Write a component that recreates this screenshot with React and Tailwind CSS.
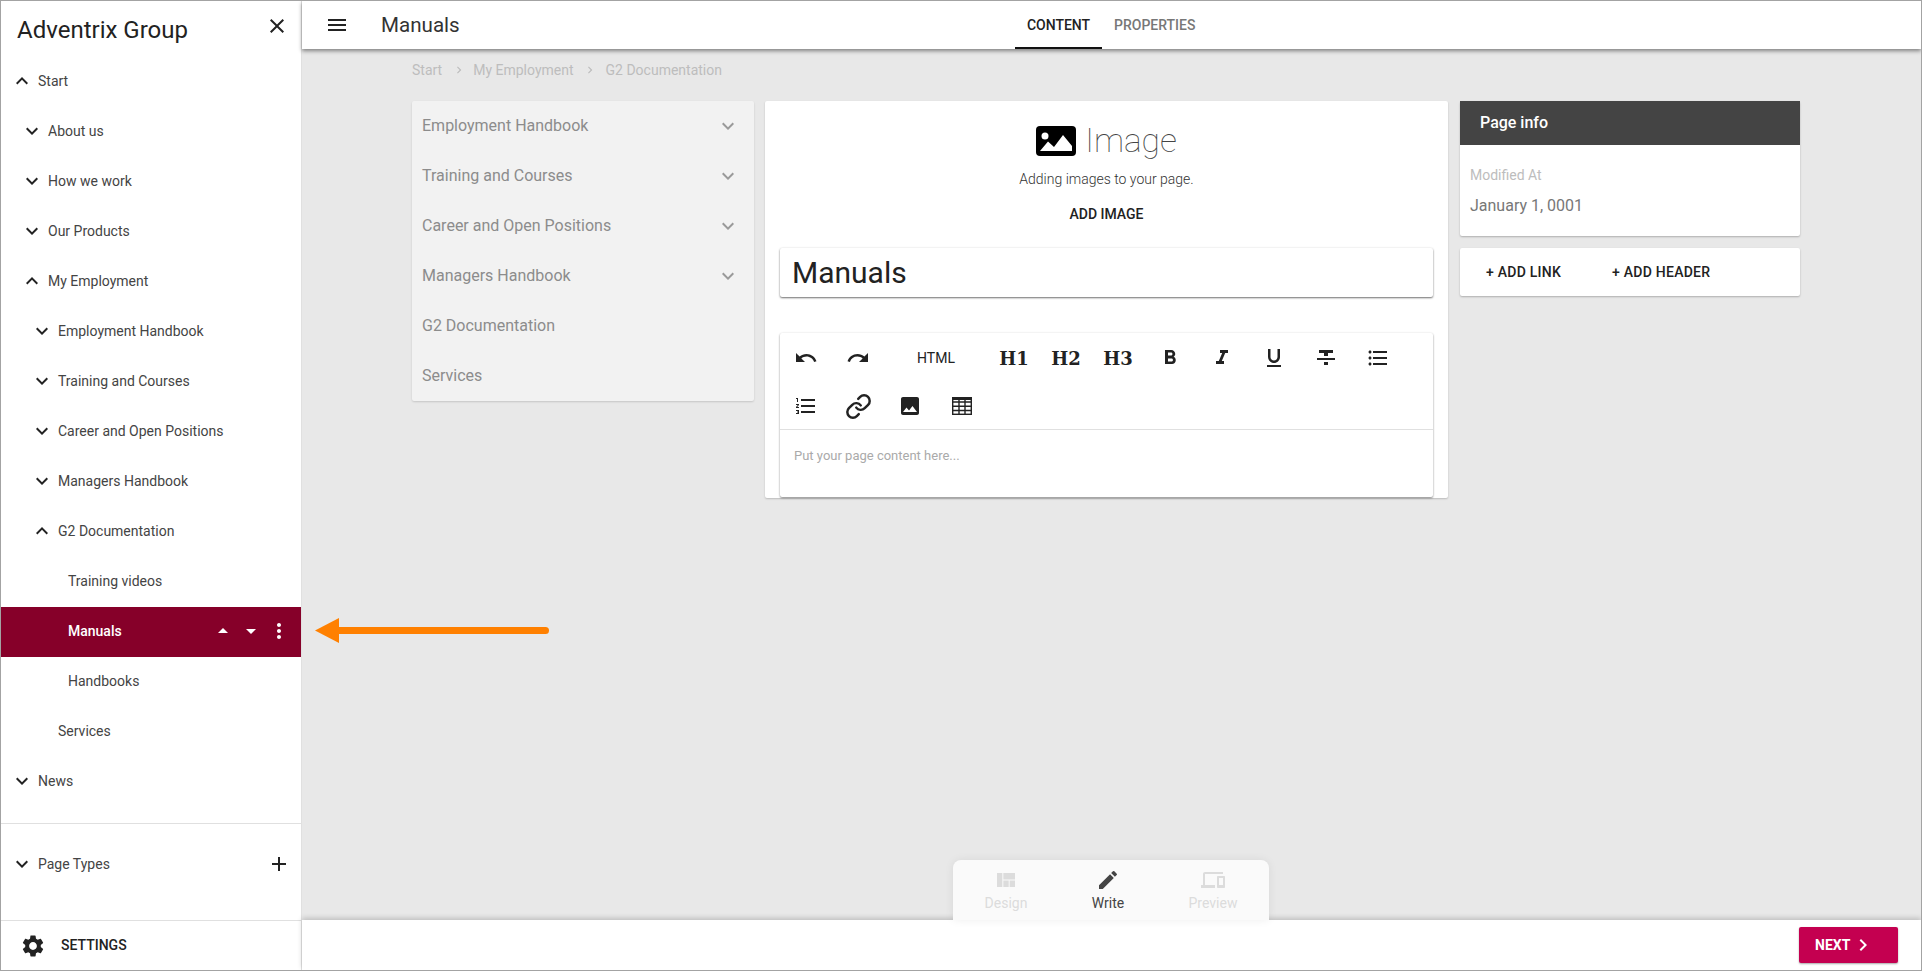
import React from "react";
import {
  MdExpandMore, MdExpandLess, MdClose, MdMenu, MdAdd, MdSettings, MdArrowDropUp, MdArrowDropDown, MdMoreVert,
  MdUndo, MdRedo, MdFormatBold, MdFormatItalic, MdFormatUnderlined, MdFormatStrikethrough, MdFormatListBulleted,
  MdFormatListNumbered, MdImage, MdViewQuilt, MdEdit, MdDevices, MdChevronRight,
} from "react-icons/md";
import { Link as LinkIcon } from "lucide-react";

const tree = [
  ["Start", "pl-[9px]", "up"],
  ["About us", "pl-[19px]", "down"],
  ["How we work", "pl-[19px]", "down"],
  ["Our Products", "pl-[19px]", "down"],
  ["My Employment", "pl-[19px]", "up"],
  ["Employment Handbook", "pl-[29px]", "down"],
  ["Training and Courses", "pl-[29px]", "down"],
  ["Career and Open Positions", "pl-[29px]", "down"],
  ["Managers Handbook", "pl-[29px]", "down"],
  ["G2 Documentation", "pl-[29px]", "up"],
  ["Training videos", "pl-[67px]", null],
  ["Manuals", "pl-[67px]", "active"],
  ["Handbooks", "pl-[67px]", null],
  ["Services", "pl-[57px]", null],
  ["News", "pl-[9px]", "down"],
];

function TreeRow({ label, pad, kind }) {
  if (kind === "active") {
    return (
      <div className={`h-[50px] flex items-center pb-[2px] bg-[#860029] text-white font-medium text-[14px] ${pad}`}>
        <span className="flex-1">{label}</span>
        <MdArrowDropUp size={24} className="mr-[4px]" />
        <MdArrowDropDown size={24} className="mr-[4px]" />
        <MdMoreVert size={24} className="mr-[10px]" />
      </div>
    );
  }
  return (
    <div className={`h-[50px] flex items-center pb-[2px] text-[#444] text-[14px] ${pad}`}>
      {kind === "up" && <MdExpandLess size={24} className="mr-[4px] text-[#222]" />}
      {kind === "down" && <MdExpandMore size={24} className="mr-[4px] text-[#222]" />}
      <span>{label}</span>
    </div>
  );
}

function Sidebar() {
  return (
    <aside className="w-[301px] shrink-0 h-full flex flex-col bg-white border-r border-[#e0e0e0]">
      <div className="h-[56px] flex items-center justify-between pl-[16px] pr-[12px]">
        <span className="text-[24px] text-[#222] leading-none pt-[2px]">Adventrix Group</span>
        <MdClose size={24} className="text-[#222] -mt-[7px]" />
      </div>
      <div className="flex-1">
        {tree.map(([l, p, k]) => <TreeRow key={l} label={l} pad={p} kind={k} />)}
      </div>
      <div className="h-[97px] border-t border-[#e0e0e0] flex items-center pl-[9px] pr-[10px] text-[14px] text-[#444] pb-[16px]">
        <MdExpandMore size={24} className="mr-[4px] text-[#222]" />
        <span className="flex-1">Page Types</span>
        <MdAdd size={24} className="text-[#222]" />
      </div>
      <div className="h-[50px] border-t border-[#e0e0e0] flex items-center pl-[19px] text-[14px] text-[#222] font-medium">
        <MdSettings size={26} className="mr-[15px] text-[#222]" />
        <span>SETTINGS</span>
      </div>
    </aside>
  );
}

const navItems = ["Employment Handbook", "Training and Courses", "Career and Open Positions", "Managers Handbook", "G2 Documentation", "Services"];

function LeftNav() {
  return (
    <div className="w-[342px] mr-[11px] shrink-0 h-[300px] bg-[#f2f2f2] shadow-[0_1px_2px_rgba(0,0,0,0.15)] rounded-[2px]">
      {navItems.map((n, i) => (
        <div key={n} className="h-[50px] flex items-center justify-between pl-[10px] pr-[14px] text-[16px] text-[#8c8c8c]">
          <span>{n}</span>
          {i < 4 && <MdExpandMore size={24} className="text-[#9a9a9a]" />}
        </div>
      ))}
    </div>
  );
}

function ImgGlyph() {
  return (
    <svg width="40" height="30" viewBox="0 0 40 30" className="mr-[9px]">
      <rect width="40" height="30" rx="4" fill="#000" />
      <circle cx="9" cy="10" r="3.5" fill="#fff" />
      <path d="M4 25 L12 15.5 L18 21 L27 9 L36 20 V25 Z" fill="#fff" />
    </svg>
  );
}

function Tool({ children, wide }) {
  return (
    <div className={`h-[48px] flex items-center justify-center text-[#222] ${wide ? "w-[104px]" : "w-[52px]"}`}>
      {children}
    </div>
  );
}

function HText({ children }) {
  return <span className="text-[18px] font-bold text-[#222] font-['DejaVu_Serif',serif]">{children}</span>;
}

function TableGlyph() {
  return (
    <svg width="20" height="18" viewBox="0 0 20 18" fill="none" stroke="#222" strokeWidth="1.4">
      <rect x="0.7" y="0.7" width="18.6" height="16.6" />
      <path d="M0.7 5H19.3M0.7 9.3H19.3M0.7 13.5H19.3M7 3V17M13 3V17" />
      <rect x="0.7" y="0.7" width="18.6" height="1.6" fill="#222" />
    </svg>
  );
}

function Editor() {
  return (
    <div className="mt-[36px] mx-[15px] h-[164px] bg-white rounded-[2px] shadow-[0_1px_2px_rgba(0,0,0,0.45),0_0_3px_rgba(0,0,0,0.06)]">
      <div className="h-[97px] flex flex-wrap content-start pt-[1px] border-b border-[#e0e0e0]">
        <Tool><MdUndo size={24} /></Tool>
        <Tool><MdRedo size={24} /></Tool>
        <Tool wide><span className="text-[14px] text-[#222]">HTML</span></Tool>
        <Tool><HText>H1</HText></Tool>
        <Tool><HText>H2</HText></Tool>
        <Tool><HText>H3</HText></Tool>
        <Tool><MdFormatBold size={24} /></Tool>
        <Tool><MdFormatItalic size={24} /></Tool>
        <Tool><MdFormatUnderlined size={24} /></Tool>
        <Tool><MdFormatStrikethrough size={24} /></Tool>
        <Tool><MdFormatListBulleted size={24} /></Tool>
        <div className="w-full h-0" />
        <Tool><MdFormatListNumbered size={24} /></Tool>
        <Tool><LinkIcon size={27} strokeWidth={2.2} /></Tool>
        <Tool><MdImage size={24} /></Tool>
        <Tool><TableGlyph /></Tool>
      </div>
      <div className="pl-[14px] pt-[16px] text-[13px] text-[#aaaaaa]">Put your page content here...</div>
    </div>
  );
}

function CenterCard() {
  return (
    <div className="w-[683px] mr-[12px] shrink-0 h-[397px] bg-white rounded-[2px] shadow-[0_1px_2px_rgba(0,0,0,0.2)]">
      <div className="h-[147px] flex flex-col items-center">
        <div className="flex items-center mt-[25px] h-[30px]">
          <ImgGlyph />
          <span className="text-[33.5px] font-thin text-[#444] leading-none">Image</span>
        </div>
        <div className="mt-[13px] text-[14px] font-light text-[#333] leading-[20px]">Adding images to your page.</div>
        <div className="mt-[15px] text-[14px] font-medium text-[#222] leading-[20px]">ADD IMAGE</div>
      </div>
      <div className="mx-[15px] h-[49px] flex items-center pl-[12px] text-[30px] text-[#222] bg-white rounded-[2px] shadow-[0_1px_2px_rgba(0,0,0,0.55),0_0_3px_rgba(0,0,0,0.06)]">
        Manuals
      </div>
      <Editor />
    </div>
  );
}

function RightCol() {
  return (
    <div className="w-[340px] shrink-0 flex flex-col gap-[12px]">
      <div className="h-[135px] bg-white rounded-[2px] shadow-[0_1px_2px_rgba(0,0,0,0.25)]">
        <div className="h-[44px] bg-[#444444] flex items-center pl-[20px] text-[16px] font-medium text-white">Page info</div>
        <div className="pl-[10px] pt-[20px]">
          <div className="text-[14px] text-[#bdbdbd] leading-[20px]">Modified At</div>
          <div className="mt-[11px] text-[16px] text-[#777] leading-[20px]">January 1, 0001</div>
        </div>
      </div>
      <div className="h-[48px] bg-white rounded-[2px] shadow-[0_1px_2px_rgba(0,0,0,0.25)] flex items-center pl-[26px] text-[14px] font-medium text-[#222] tracking-[0.25px]">
        <span className="w-[126px]">+ ADD LINK</span>
        <span>+ ADD HEADER</span>
      </div>
    </div>
  );
}

function BottomTab({ icon, label, active, cls }) {
  return (
    <div className={`flex flex-col items-center ${cls} ${active ? "text-[#444]" : "text-[#dcdcdc]"}`}>
      {icon}
      <span className="text-[14px] leading-[20px] mt-[1px]">{label}</span>
    </div>
  );
}

export default function App() {
  return (
    <div className="relative w-full h-[971px] overflow-hidden border border-[#a3a3a3] flex bg-white font-['Roboto',sans-serif]">
      <Sidebar />
      <div className="flex-1 min-w-0 flex flex-col bg-[#e8e8e8]">
        <header className="relative z-20 h-[48px] shrink-0 bg-white flex items-center shadow-[0_2px_4px_rgba(0,0,0,0.45)]">
          <div className="flex items-center w-[713px] pl-[23px]">
            <MdMenu size={24} className="text-[#222] mr-[32px]" />
            <span className="text-[20.6px] text-[#333]">Manuals</span>
          </div>
          <div className="h-full flex items-center justify-center w-[87px] pt-[2px] text-[14px] font-medium text-[#222] border-b-2 border-[#111]">CONTENT</div>
          <div className="h-full flex items-center ml-[12px] text-[14px] font-medium text-[#777]">PROPERTIES</div>
        </header>
        <main className="flex-1 min-h-0 pl-[110px]">
          <div className="h-[52px] flex items-center text-[14px] text-[#bdbdbd] pb-[10px]">
            <span>Start</span>
            <MdChevronRight size={14} className="ml-[10px] mr-[7px]" />
            <span>My Employment</span>
            <MdChevronRight size={14} className="ml-[9px] mr-[9px]" />
            <span>G2 Documentation</span>
          </div>
          <div className="flex items-start">
            <LeftNav />
            <CenterCard />
            <RightCol />
          </div>
        </main>
        <footer className="relative z-20 h-[50px] shrink-0 bg-white flex items-center justify-end pr-[23px] shadow-[0_-2px_5px_rgba(0,0,0,0.18)]">
          <div className="w-[99px] h-[36px] rounded-[2px] bg-[#c40050] text-white text-[14px] font-bold flex items-center pl-[16px] shadow-[0_1px_2px_rgba(0,0,0,0.35)]">
            NEXT
            <MdChevronRight size={24} className="ml-[1px]" />
          </div>
        </footer>
      </div>

      <div className="absolute z-30 left-[952px] top-[859px] w-[316px] h-[60px] rounded-t-[8px] bg-[#fafafa] shadow-[0_0_10px_rgba(0,0,0,0.07)]">
        <BottomTab cls="absolute left-[24px] top-[8px] w-[58px]" icon={<MdViewQuilt size={24} />} label="Design" />
        <BottomTab cls="absolute left-[126px] top-[8px] w-[58px]" active icon={<MdEdit size={24} />} label="Write" />
        <BottomTab cls="absolute left-[231px] top-[8px] w-[58px]" icon={<MdDevices size={24} />} label="Preview" />
      </div>

      <svg className="absolute z-30 left-[314px] top-[616px]" width="236" height="27" viewBox="0 0 236 27">
        <path d="M0 13.5 L24 1 V26 Z" fill="#ff8000" />
        <rect x="20" y="10" width="214" height="7" rx="3.5" fill="#ff8000" />
      </svg>
    </div>
  );
}
